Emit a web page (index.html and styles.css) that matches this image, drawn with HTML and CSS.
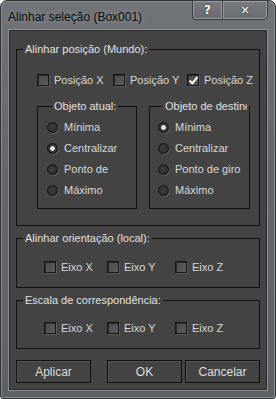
FILE: index.html
```html
<!DOCTYPE html>
<html>
<head>
    <meta charset="UTF-8">
    <title>Alinhar seleção (Box001)</title>
    <link rel="stylesheet" href="styles.css">
</head>
<body>
    <div class="window">
        <div class="titlebar">
            <span class="title">Alinhar seleção (Box001)</span>
            <div class="caption-buttons">
                <button class="cap-btn help">?</button>
                <button class="cap-btn close">✕</button>
            </div>
        </div>
        <div class="client">
            <fieldset class="group pos-group">
                <legend>Alinhar posição (Mundo):</legend>
                <div class="axis-row pos-row">
                    <label class="check"><span class="box"></span>Posição X</label>
                    <label class="check"><span class="box"></span>Posição Y</label>
                    <label class="check"><span class="box checked"></span>Posição Z</label>
                </div>
                <div class="subgroups">
                    <fieldset class="group sub">
                        <legend>Objeto atual:</legend>
                        <label class="radio"><span class="dot"></span>Mínima</label>
                        <label class="radio"><span class="dot on"></span>Centralizar</label>
                        <label class="radio"><span class="dot"></span>Ponto de</label>
                        <label class="radio"><span class="dot"></span>Máximo</label>
                    </fieldset>
                    <fieldset class="group sub right">
                        <legend><span class="clip-legend">Objeto de destino:</span></legend>
                        <label class="radio"><span class="dot on"></span>Mínima</label>
                        <label class="radio"><span class="dot"></span>Centralizar</label>
                        <label class="radio"><span class="dot"></span>Ponto de giro</label>
                        <label class="radio"><span class="dot"></span>Máximo</label>
                    </fieldset>
                </div>
            </fieldset>

            <fieldset class="group small-group">
                <legend>Alinhar orientação (local):</legend>
                <div class="axis-row eixo-row">
                    <label class="check"><span class="box"></span>Eixo X</label>
                    <label class="check"><span class="box"></span>Eixo Y</label>
                    <label class="check"><span class="box"></span>Eixo Z</label>
                </div>
            </fieldset>

            <fieldset class="group small-group last">
                <legend>Escala de correspondência:</legend>
                <div class="axis-row eixo-row">
                    <label class="check"><span class="box"></span>Eixo X</label>
                    <label class="check"><span class="box"></span>Eixo Y</label>
                    <label class="check"><span class="box"></span>Eixo Z</label>
                </div>
            </fieldset>

            <div class="actions">
                <button class="btn">Aplicar</button>
                <button class="btn ok">OK</button>
                <button class="btn">Cancelar</button>
            </div>
        </div>
    </div>
</body>
</html>
```

FILE: styles.css
```css
* {
    box-sizing: border-box;
}

body {
    margin: 0;
    background-color: #fff;
    font-family: "Liberation Sans", Arial, sans-serif;
    font-size: 11px;
}

.window {
    width: 276px;
    height: 399px;
    border: 1px solid #2e3134;
    border-radius: 7px 7px 3px 3px;
    background: linear-gradient(180deg, #707479 0%, #63676c 40%, #5d6166 100%);
    box-shadow: inset 0 0 0 1px #8c9095;
    display: flex;
    flex-direction: column;
}

.titlebar {
    height: 28px;
    display: flex;
    justify-content: space-between;
    align-items: flex-start;
    padding: 0 7px 0 7px;
}

.title {
    margin-top: 9px;
    font-size: 12px;
    color: #0a0a0a;
    text-shadow: 0 0 6px rgba(255, 255, 255, 0.35);
}

.caption-buttons {
    display: flex;
    margin-top: -1px;
}

.cap-btn {
    height: 20px;
    border: 1px solid #3a3d41;
    box-shadow: inset 0 0 0 1px #9a9ea3;
    background: linear-gradient(180deg, #777b80, #686c71);
    color: #fff;
    font-family: "DejaVu Sans", sans-serif;
    font-weight: bold;
    font-size: 12px;
    padding: 0;
    text-shadow: 0 0 2px #222;
}

.cap-btn.help {
    width: 30px;
    border-radius: 0 0 0 4px;
    border-right: none;
}

.cap-btn.close {
    width: 46px;
    border-radius: 0 0 4px 0;
    font-size: 11px;
}

.client {
    flex: 1;
    margin: 0 7px 7px 7px;
    background-color: #444;
    border: 1px solid #8f9398;
    box-shadow: inset 0 0 0 1px #2b2b2b;
    padding: 12px 7px 7px 7px;
    display: flex;
    flex-direction: column;
    color: #d8d8d8;
}

.group {
    margin: 0;
    border: 1px solid #111;
    padding: 0;
    min-width: 0;
}

.group legend {
    padding: 0 2px;
    margin-left: 6px;
    line-height: 14px;
    color: #e0e0e0;
}

.pos-group {
    padding: 17px 0 16px 0;
}

.axis-row {
    display: grid;
    height: 14px;
    align-items: center;
}

.pos-row {
    grid-template-columns: 76px 74px auto;
    padding-left: 20px;
}

.eixo-row {
    grid-template-columns: 63px 68px auto;
    padding-left: 27px;
}

.check {
    display: flex;
    align-items: center;
    white-space: nowrap;
}

.box {
    width: 12px;
    height: 12px;
    margin-right: 5px;
    border: 1px solid #161616;
    background: linear-gradient(135deg, #4a4a4a, #5c5c5c);
    box-shadow: inset 1px 1px 0 #2d2d2d, 1px 1px 0 #5a5a5a;
    position: relative;
}

.box.checked::after {
    content: "";
    position: absolute;
    left: 3px;
    top: 0px;
    width: 3px;
    height: 7px;
    border: solid #f4f4f4;
    border-width: 0 2px 2px 0;
    transform: rotate(40deg);
}

.subgroups {
    display: flex;
    gap: 12px;
    margin: 12px 0 0 20px;
}

.sub {
    width: 100px;
    height: 110px;
    padding: 7px 0 0 9px;
    display: flex;
    flex-direction: column;
    gap: 7px;
}

.sub.right {
    width: 101px;
    padding-left: 8px;
}

.sub legend {
    margin-left: 5px;
}

.clip-legend {
    display: inline-block;
    width: 82px;
    overflow: hidden;
    white-space: nowrap;
    vertical-align: top;
}

.radio {
    display: flex;
    align-items: center;
    height: 14px;
    white-space: nowrap;
}

.dot {
    width: 11px;
    height: 11px;
    margin-right: 6px;
    border-radius: 50%;
    border: 1px solid #151515;
    background: radial-gradient(circle at 45% 45%, #3e3e3e 0%, #2a2a2a 100%);
    box-shadow: 1px 1px 0 #5a5a5a;
}

.dot.on {
    background: radial-gradient(circle at 50% 50%, #f2f2f2 0%, #e0e0e0 30%, #3a3a3a 45%, #262626 100%);
}

.small-group {
    margin-top: 5px;
    padding: 15px 0 13px 0;
}

.small-group.last {
    padding: 14px 0 13px 0;
}

.actions {
    display: flex;
    justify-content: space-between;
    margin-top: 11px;
}

.btn {
    width: 75px;
    height: 23px;
    background-color: #444;
    border: 1px solid #0f0f0f;
    box-shadow: inset 1px 1px 0 #555;
    color: #dcdcdc;
    font-family: "Liberation Sans", Arial, sans-serif;
    font-size: 12px;
    padding: 0;
}

.btn.ok {
    margin-right: auto;
    margin-left: 16px;
}
```
